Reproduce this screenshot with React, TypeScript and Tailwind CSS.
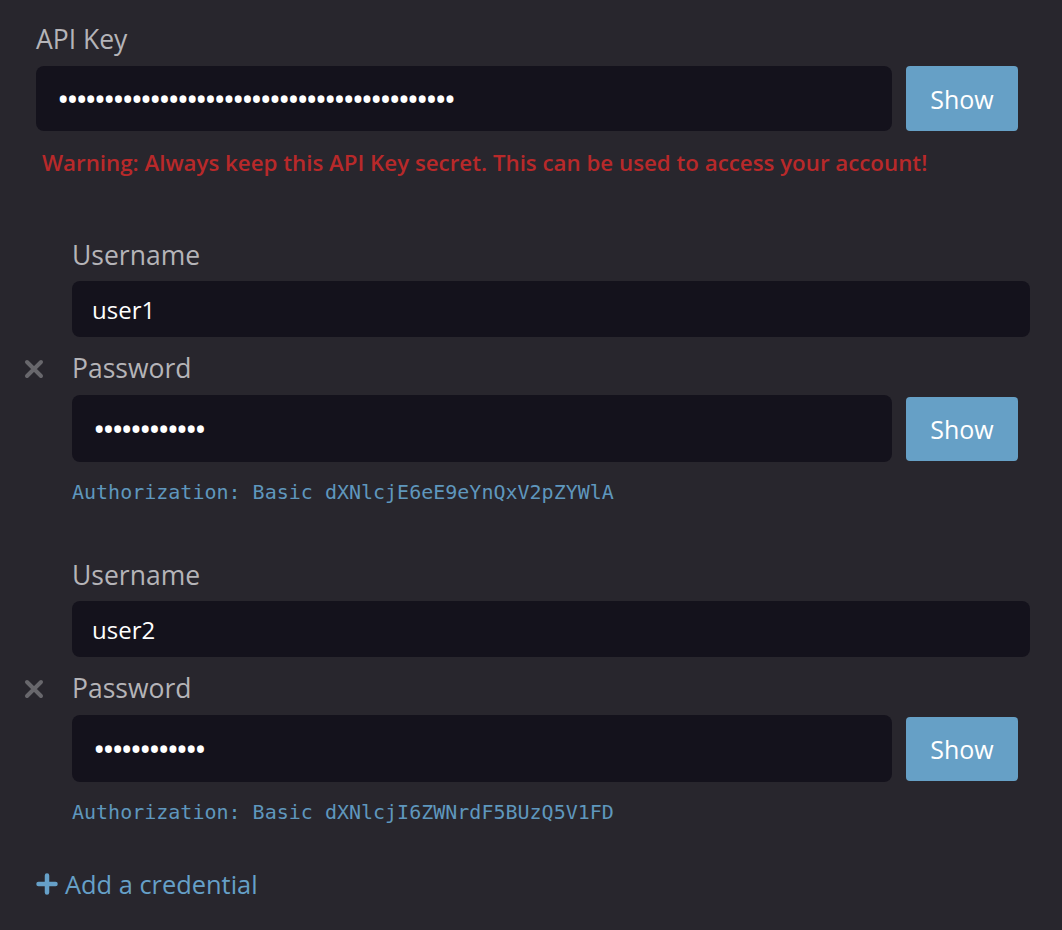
import React from "react";

const sans = { fontFamily: '"Open Sans", "Noto Sans", sans-serif' };

function XIcon() {
  return (
    <svg width="20" height="20" viewBox="0 0 20 20" className="block">
      <path d="M3 3 L17 17 M17 3 L3 17" stroke="#68676c" strokeWidth="4" strokeLinecap="round" />
    </svg>
  );
}

function PlusIcon() {
  return (
    <svg width="22" height="22" viewBox="0 0 22 22" className="block">
      <path d="M11 2.5 V19.5 M2.5 11 H19.5" stroke="#66a0c8" strokeWidth="4.5" strokeLinecap="round" />
    </svg>
  );
}

function ShowButton({ h }: { h: string }) {
  return (
    <button
      className={`ml-[14px] mr-[12px] w-[112px] ${h} shrink-0 rounded-[4px] bg-[#66a0c6] pt-[2px] text-[25px] text-white`}
      style={sans}
    >
      Show
    </button>
  );
}

function Dots({ n }: { n: number }) {
  return (
    <span className="text-[33px] leading-none tracking-[-3.2px] text-white">{"•".repeat(n)}</span>
  );
}

function Credential({ user, auth }: { user: string; auth: string }) {
  return (
    <div className="flex items-center">
      <div className="w-[72px] shrink-0 flex justify-start pl-[24px]">
        <XIcon />
      </div>
      <div className="flex-1">
        <div className="h-[38px] pt-[2px] text-[26.5px] leading-[38px] text-[#b5b4b8]">Username</div>
        <div className="mt-[9px] h-[56px] rounded-[8px] bg-[#14121c] pl-[20px] pt-[2px] flex items-center text-[24px] text-white">
          {user}
        </div>
        <div className="mt-[10px] h-[38px] pt-[2px] text-[26.5px] leading-[38px] text-[#b5b4b8]">Password</div>
        <div className="mt-[10px] flex items-center">
          <div className="flex-1 h-[67px] rounded-[8px] bg-[#14121c] pl-[21px] flex items-center">
            <Dots n={12} />
          </div>
          <ShowButton h="h-[64px]" />
        </div>
        <div
          className="mt-[18px] h-[24px] text-[20px] leading-[24px] text-[#5f97bd]"
          style={{ fontFamily: '"DejaVu Sans Mono", monospace' }}
        >
          Authorization: Basic {auth}
        </div>
      </div>
    </div>
  );
}

export default function App() {
  return (
    <div className="min-h-[930px] w-full bg-[#28262d] pr-[32px] pt-[18px]" style={sans}>
      <div className="pl-[36px]">
        <div className="h-[38px] pt-[2px] text-[26.5px] leading-[38px] text-[#b5b4b8]">API Key</div>
        <div className="mt-[10px] flex items-center">
          <div className="flex-1 h-[65px] rounded-[8px] bg-[#14121c] pl-[21px] flex items-center">
            <Dots n={43} />
          </div>
          <ShowButton h="h-[65px]" />
        </div>
        <div className="mt-[17px] h-[30px] pl-[6px] text-[22.3px] font-semibold leading-[30px] text-[#b8292a]">
          Warning: Always keep this API Key secret. This can be used to access your account!
        </div>
      </div>
      <div className="mt-[56px]">
        <Credential user="user1" auth="dXNlcjE6eE9eYnQxV2pZYWlA" />
      </div>
      <div className="mt-[50px]">
        <Credential user="user2" auth="dXNlcjI6ZWNrdF5BUzQ5V1FD" />
      </div>
      <div className="mt-[42px] pl-[36px] flex items-center gap-[7px] h-[36px] text-[25.4px] leading-[36px] text-[#66a0c8]">
        <PlusIcon />
        <span>Add a credential</span>
      </div>
    </div>
  );
}
